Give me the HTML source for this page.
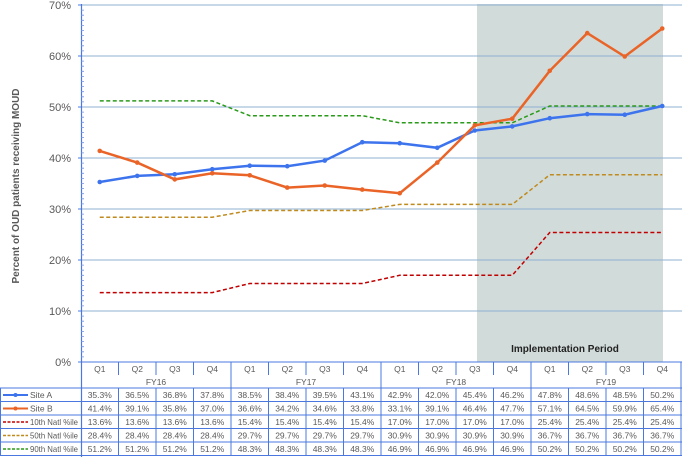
<!DOCTYPE html>
<html><head><meta charset="utf-8"><style>
html,body{margin:0;padding:0;background:#fff;}
svg{display:block;font-family:"Liberation Sans",sans-serif;}
</style></head><body>
<svg width="682" height="457" viewBox="0 0 682 457" xmlns="http://www.w3.org/2000/svg">
<rect x="477" y="4" width="186" height="358" fill="#d1dcda"/>
<g stroke="#8fb0d2" stroke-width="1">
<line x1="81" x2="682" y1="5" y2="5"/><line x1="81" x2="682" y1="56" y2="56"/>
<line x1="81" x2="682" y1="107" y2="107"/><line x1="81" x2="682" y1="158" y2="158"/>
<line x1="81" x2="682" y1="209" y2="209"/><line x1="81" x2="682" y1="260" y2="260"/>
<line x1="81" x2="682" y1="311" y2="311"/>
</g>
<g fill="#595959" font-size="11" text-anchor="end">
<text x="71" y="9">70%</text><text x="71" y="60">60%</text><text x="71" y="111">50%</text>
<text x="71" y="162">40%</text><text x="71" y="213">30%</text><text x="71" y="264">20%</text>
<text x="71" y="315">10%</text><text x="71" y="366">0%</text>
</g>
<text transform="translate(19,186) rotate(-90)" text-anchor="middle" font-size="10" font-weight="bold" fill="#595959">Percent of OUD patients receiving MOUD</text>
<text x="565" y="352" text-anchor="middle" font-size="10" font-weight="bold" fill="#222">Implementation Period</text>
<line x1="81.5" y1="4" x2="81.5" y2="457" stroke="#4a78e0" stroke-width="1.2"/>
<path stroke="#4a78e0" stroke-width="1" d="M78 5h4M78 56h4M78 107h4M78 158h4M78 209h4M78 260h4M78 311h4M78 362h4"/>
<path stroke="#6f94e6" stroke-width="0.8" d="M81 10.1h3M81 15.2h3M81 20.3h3M81 25.4h3M81 30.5h3M81 35.6h3M81 40.7h3M81 45.8h3M81 50.9h3M81 61.1h3M81 66.2h3M81 71.3h3M81 76.4h3M81 81.5h3M81 86.6h3M81 91.7h3M81 96.8h3M81 101.9h3M81 112.1h3M81 117.2h3M81 122.3h3M81 127.4h3M81 132.5h3M81 137.6h3M81 142.7h3M81 147.8h3M81 152.9h3M81 163.1h3M81 168.2h3M81 173.3h3M81 178.4h3M81 183.5h3M81 188.6h3M81 193.7h3M81 198.8h3M81 203.9h3M81 214.1h3M81 219.2h3M81 224.3h3M81 229.4h3M81 234.5h3M81 239.6h3M81 244.7h3M81 249.8h3M81 254.9h3M81 265.1h3M81 270.2h3M81 275.3h3M81 280.4h3M81 285.5h3M81 290.6h3M81 295.7h3M81 300.8h3M81 305.9h3M81 316.1h3M81 321.2h3M81 326.3h3M81 331.4h3M81 336.5h3M81 341.6h3M81 346.7h3M81 351.8h3M81 356.9h3"/>
<g fill="none" stroke-width="1.5" stroke-dasharray="4,2.5">
<polyline stroke="#c00000" points="99.75,292.6 212.25,292.6 249.75,283.5 362.25,283.5 399.75,275.3 512.25,275.3 549.75,232.5 662.25,232.5"/>
<polyline stroke="#bf8a1e" points="99.75,217.2 212.25,217.2 249.75,210.5 362.25,210.5 399.75,204.4 512.25,204.4 549.75,174.8 662.25,174.8"/>
<polyline stroke="#2a9a1a" points="99.75,100.9 212.25,100.9 249.75,115.7 362.25,115.7 399.75,122.8 512.25,122.8 549.75,106 662.25,106"/>
</g>
<polyline fill="none" stroke="#3d74ee" stroke-width="2.5" points="99.75,182 137.25,175.9 174.75,174.3 212.25,169.2 249.75,165.7 287.25,166.2 324.75,160.6 362.25,142.2 399.75,143.2 437.25,147.8 474.75,130.5 512.25,126.4 549.75,118.2 587.25,114.1 624.75,114.7 662.25,106"/>
<g fill="#3d74ee"><circle cx="99.75" cy="182" r="2.3"/><circle cx="137.25" cy="175.9" r="2.3"/><circle cx="174.75" cy="174.3" r="2.3"/><circle cx="212.25" cy="169.2" r="2.3"/><circle cx="249.75" cy="165.7" r="2.3"/><circle cx="287.25" cy="166.2" r="2.3"/><circle cx="324.75" cy="160.6" r="2.3"/><circle cx="362.25" cy="142.2" r="2.3"/><circle cx="399.75" cy="143.2" r="2.3"/><circle cx="437.25" cy="147.8" r="2.3"/><circle cx="474.75" cy="130.5" r="2.3"/><circle cx="512.25" cy="126.4" r="2.3"/><circle cx="549.75" cy="118.2" r="2.3"/><circle cx="587.25" cy="114.1" r="2.3"/><circle cx="624.75" cy="114.7" r="2.3"/><circle cx="662.25" cy="106" r="2.3"/></g>
<polyline fill="none" stroke="#ea6428" stroke-width="2.5" points="99.75,150.9 137.25,162.6 174.75,179.4 212.25,173.3 249.75,175.3 287.25,187.6 324.75,185.5 362.25,189.6 399.75,193.2 437.25,162.6 474.75,125.4 512.25,118.7 549.75,70.8 587.25,33.1 624.75,56.5 662.25,28.5"/>
<g fill="#ea6428"><circle cx="99.75" cy="150.9" r="2.3"/><circle cx="137.25" cy="162.6" r="2.3"/><circle cx="174.75" cy="179.4" r="2.3"/><circle cx="212.25" cy="173.3" r="2.3"/><circle cx="249.75" cy="175.3" r="2.3"/><circle cx="287.25" cy="187.6" r="2.3"/><circle cx="324.75" cy="185.5" r="2.3"/><circle cx="362.25" cy="189.6" r="2.3"/><circle cx="399.75" cy="193.2" r="2.3"/><circle cx="437.25" cy="162.6" r="2.3"/><circle cx="474.75" cy="125.4" r="2.3"/><circle cx="512.25" cy="118.7" r="2.3"/><circle cx="549.75" cy="70.8" r="2.3"/><circle cx="587.25" cy="33.1" r="2.3"/><circle cx="624.75" cy="56.5" r="2.3"/><circle cx="662.25" cy="28.5" r="2.3"/></g>
<g stroke="#4a78e0" stroke-width="1">
<line x1="81" y1="362" x2="682" y2="362"/>
<path d="M118.5 362v13M156 362v13M193.5 362v13M268.5 362v13M306 362v13M343.5 362v13M418.5 362v13M456 362v13M493.5 362v13M568.5 362v13M606 362v13M643.5 362v13"/>
<path d="M231 362v94M381 362v94M531 362v94M681 362v94"/>
<path d="M118.5 388v68M156 388v68M193.5 388v68M268.5 388v68M306 388v68M343.5 388v68M418.5 388v68M456 388v68M493.5 388v68M568.5 388v68M606 388v68M643.5 388v68"/>
<path d="M0 388h682M0 401.5h682M0 415h682M0 428.5h682M0 442h682M0 455.5h682M0.5 388v68"/>
</g>
<g fill="#595959" font-size="8.5" text-anchor="middle">
<text y="372"><tspan x="99.75">Q1</tspan><tspan x="137.25">Q2</tspan><tspan x="174.75">Q3</tspan><tspan x="212.25">Q4</tspan><tspan x="249.75">Q1</tspan><tspan x="287.25">Q2</tspan><tspan x="324.75">Q3</tspan><tspan x="362.25">Q4</tspan><tspan x="399.75">Q1</tspan><tspan x="437.25">Q2</tspan><tspan x="474.75">Q3</tspan><tspan x="512.25">Q4</tspan><tspan x="549.75">Q1</tspan><tspan x="587.25">Q2</tspan><tspan x="624.75">Q3</tspan><tspan x="662.25">Q4</tspan></text>
<text y="385"><tspan x="156">FY16</tspan><tspan x="306">FY17</tspan><tspan x="456">FY18</tspan><tspan x="606">FY19</tspan></text>
<text y="398"><tspan x="99.75">35.3%</tspan><tspan x="137.25">36.5%</tspan><tspan x="174.75">36.8%</tspan><tspan x="212.25">37.8%</tspan><tspan x="249.75">38.5%</tspan><tspan x="287.25">38.4%</tspan><tspan x="324.75">39.5%</tspan><tspan x="362.25">43.1%</tspan><tspan x="399.75">42.9%</tspan><tspan x="437.25">42.0%</tspan><tspan x="474.75">45.4%</tspan><tspan x="512.25">46.2%</tspan><tspan x="549.75">47.8%</tspan><tspan x="587.25">48.6%</tspan><tspan x="624.75">48.5%</tspan><tspan x="662.25">50.2%</tspan></text>
<text y="411.5"><tspan x="99.75">41.4%</tspan><tspan x="137.25">39.1%</tspan><tspan x="174.75">35.8%</tspan><tspan x="212.25">37.0%</tspan><tspan x="249.75">36.6%</tspan><tspan x="287.25">34.2%</tspan><tspan x="324.75">34.6%</tspan><tspan x="362.25">33.8%</tspan><tspan x="399.75">33.1%</tspan><tspan x="437.25">39.1%</tspan><tspan x="474.75">46.4%</tspan><tspan x="512.25">47.7%</tspan><tspan x="549.75">57.1%</tspan><tspan x="587.25">64.5%</tspan><tspan x="624.75">59.9%</tspan><tspan x="662.25">65.4%</tspan></text>
<text y="425"><tspan x="99.75">13.6%</tspan><tspan x="137.25">13.6%</tspan><tspan x="174.75">13.6%</tspan><tspan x="212.25">13.6%</tspan><tspan x="249.75">15.4%</tspan><tspan x="287.25">15.4%</tspan><tspan x="324.75">15.4%</tspan><tspan x="362.25">15.4%</tspan><tspan x="399.75">17.0%</tspan><tspan x="437.25">17.0%</tspan><tspan x="474.75">17.0%</tspan><tspan x="512.25">17.0%</tspan><tspan x="549.75">25.4%</tspan><tspan x="587.25">25.4%</tspan><tspan x="624.75">25.4%</tspan><tspan x="662.25">25.4%</tspan></text>
<text y="438.5"><tspan x="99.75">28.4%</tspan><tspan x="137.25">28.4%</tspan><tspan x="174.75">28.4%</tspan><tspan x="212.25">28.4%</tspan><tspan x="249.75">29.7%</tspan><tspan x="287.25">29.7%</tspan><tspan x="324.75">29.7%</tspan><tspan x="362.25">29.7%</tspan><tspan x="399.75">30.9%</tspan><tspan x="437.25">30.9%</tspan><tspan x="474.75">30.9%</tspan><tspan x="512.25">30.9%</tspan><tspan x="549.75">36.7%</tspan><tspan x="587.25">36.7%</tspan><tspan x="624.75">36.7%</tspan><tspan x="662.25">36.7%</tspan></text>
<text y="452"><tspan x="99.75">51.2%</tspan><tspan x="137.25">51.2%</tspan><tspan x="174.75">51.2%</tspan><tspan x="212.25">51.2%</tspan><tspan x="249.75">48.3%</tspan><tspan x="287.25">48.3%</tspan><tspan x="324.75">48.3%</tspan><tspan x="362.25">48.3%</tspan><tspan x="399.75">46.9%</tspan><tspan x="437.25">46.9%</tspan><tspan x="474.75">46.9%</tspan><tspan x="512.25">46.9%</tspan><tspan x="549.75">50.2%</tspan><tspan x="587.25">50.2%</tspan><tspan x="624.75">50.2%</tspan><tspan x="662.25">50.2%</tspan></text>
</g>
<g stroke-width="2">
<line x1="3" y1="395" x2="28" y2="395" stroke="#3d74ee"/><circle cx="15.5" cy="395" r="2" fill="#3d74ee"/>
<line x1="3" y1="408.5" x2="28" y2="408.5" stroke="#ea6428"/><circle cx="15.5" cy="408.5" r="2" fill="#ea6428"/>
</g>
<g stroke-width="1.5" stroke-dasharray="3,1.5">
<line x1="3" y1="422" x2="28" y2="422" stroke="#c00000"/>
<line x1="3" y1="435.5" x2="28" y2="435.5" stroke="#bf8a1e"/>
<line x1="3" y1="449" x2="28" y2="449" stroke="#2a9a1a"/>
</g>
<g fill="#595959" font-size="8.5">
<text x="30" y="398">Site A</text><text x="30" y="411.5">Site B</text>
<text x="30" y="425" textLength="48" lengthAdjust="spacingAndGlyphs">10th Natl %ile</text>
<text x="30" y="438.5" textLength="48" lengthAdjust="spacingAndGlyphs">50th Natl %ile</text>
<text x="30" y="452" textLength="48" lengthAdjust="spacingAndGlyphs">90th Natl %ile</text>
</g>
</svg>
</body></html>
